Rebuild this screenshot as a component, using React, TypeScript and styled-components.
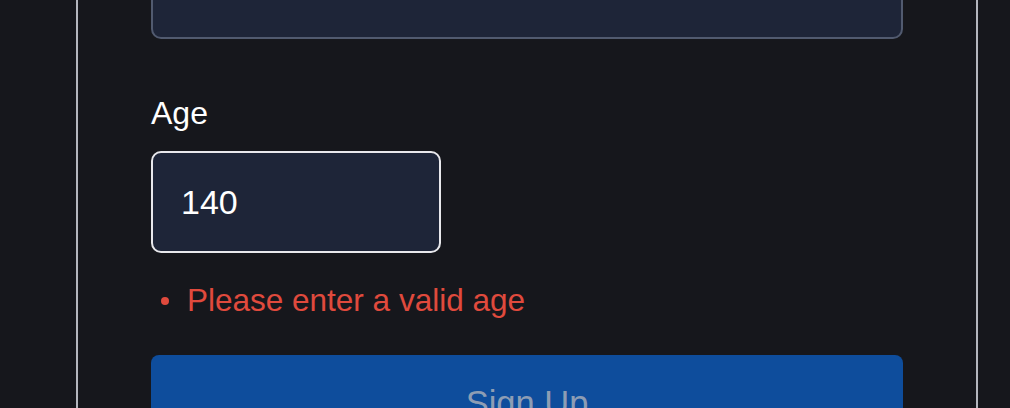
import styled, { createGlobalStyle } from 'styled-components';

const GlobalStyle = createGlobalStyle`
  html, body {
    margin: 0;
    padding: 0;
    background: #16171c;
  }
  body {
    font-family: 'Liberation Sans', Arial, sans-serif;
    color: #ffffff;
  }
`;

const Page = styled.div`
  height: 408px;
  overflow: hidden;
  padding-left: 76px;
`;

const Card = styled.form`
  box-sizing: border-box;
  width: 902px;
  margin-top: -140px;
  padding: 75px 73px 72px;
  border: 2px solid #b4b6be;
  border-radius: 6px;
  background: #16171c;
  display: flex;
  flex-direction: column;
  gap: 56px;
`;

const Field = styled.div`
  display: flex;
  flex-direction: column;
  align-items: flex-start;
`;

const Label = styled.label`
  font-size: 32px;
  line-height: 37px;
  color: #ffffff;
  margin-bottom: 19px;
`;

const Input = styled.input<{ $width?: number; $focused?: boolean }>`
  box-sizing: border-box;
  width: ${(p) => (p.$width ? `${p.$width}px` : '100%')};
  height: 102px;
  padding: 0 28px;
  font-family: inherit;
  font-size: 34px;
  color: #ffffff;
  background: #1e2538;
  border: ${(p) => (p.$focused ? '2px solid #e8e8ec' : '2px solid #515a6f')};
  border-radius: 10px;
  outline: none;
`;

const ErrorList = styled.ul`
  list-style: none;
  margin: 29px 0 0;
  padding: 0;
`;

const ErrorItem = styled.li`
  position: relative;
  padding-left: 36px;
  font-size: 31.5px;
  line-height: 37px;
  color: #e04a3d;

  &::before {
    content: '';
    position: absolute;
    left: 10px;
    top: 15px;
    width: 8px;
    height: 8px;
    border-radius: 50%;
    background: #e04a3d;
  }
`;

const SubmitButton = styled.button`
  box-sizing: border-box;
  width: 100%;
  margin-top: -20px;
  padding: 28px 0;
  font-family: inherit;
  font-size: 34.5px;
  line-height: 40px;
  color: #8d9db4;
  background: #0e4d9c;
  border: none;
  border-radius: 8px;
  cursor: not-allowed;
`;

export default function App() {
  return (
    <>
      <GlobalStyle />
      <Page>
        <Card onSubmit={(e) => e.preventDefault()}>
          <Field>
            <Input type="password" aria-label="Confirm password" />
          </Field>
          <Field>
            <Label htmlFor="age">Age</Label>
            <Input id="age" type="text" defaultValue="140" $width={290} $focused />
            <ErrorList>
              <ErrorItem>Please enter a valid age</ErrorItem>
            </ErrorList>
          </Field>
          <SubmitButton type="submit" disabled>
            Sign Up
          </SubmitButton>
        </Card>
      </Page>
    </>
  );
}
